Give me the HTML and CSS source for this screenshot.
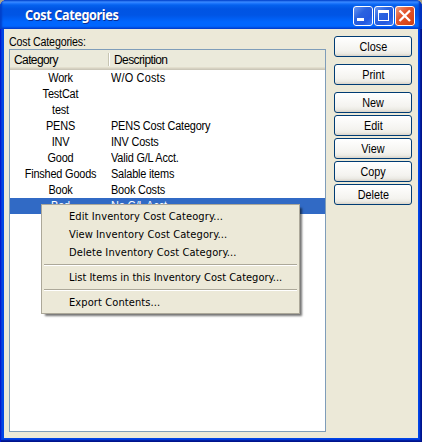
FILE: index.html
```html
<!DOCTYPE html>
<html lang="en">
<head>
<meta charset="utf-8">
<title>Cost Categories</title>
<link rel="stylesheet" href="styles.css">
</head>
<body>
<div class="window">
  <header class="titlebar">
    <h1>Cost Categories</h1>
    <div class="controls">
      <svg class="control" viewBox="0 0 20 20"><rect class="face" x=".5" y=".5" width="19" height="19" rx="2.5"/><path d="M4 12h7v3H4z" fill="#fff"/></svg>
      <svg class="control" viewBox="0 0 20 20"><rect class="face" x=".5" y=".5" width="19" height="19" rx="2.5"/><path d="M4 4h11v11H4zM5 7v7h9V7z" fill="#fff" fill-rule="evenodd"/></svg>
      <svg class="control close" viewBox="0 0 20 20"><rect class="face" x=".5" y=".5" width="19" height="19" rx="2.5"/><path d="M4.5 4.5l10.5 10.5M15 4.5L4.5 15" stroke="#fff" stroke-width="2.3"/></svg>
    </div>
  </header>
  <main class="client">
    <section class="panel">
      <div class="label">Cost Categories:</div>
      <div class="list">
        <div class="head"><span>Category</span><span>Description</span></div>
        <div class="row"><span>Work</span><span class="wo">W/O Costs</span></div>
        <div class="row"><span>TestCat</span><span></span></div>
        <div class="row"><span>test</span><span></span></div>
        <div class="row"><span>PENS</span><span>PENS Cost Category</span></div>
        <div class="row"><span>INV</span><span>INV Costs</span></div>
        <div class="row"><span>Good</span><span>Valid G/L Acct.</span></div>
        <div class="row"><span>Finshed Goods</span><span>Salable items</span></div>
        <div class="row"><span>Book</span><span>Book Costs</span></div>
        <div class="row selected"><span>Bad</span><span>No G/L Acct</span></div>
      </div>
    </section>
    <nav class="buttons">
      <button class="apart"><span>Close</span></button>
      <button class="apart"><span>Print</span></button>
      <button><span>New</span></button>
      <button><span>Edit</span></button>
      <button><span>View</span></button>
      <button><span>Copy</span></button>
      <button><span>Delete</span></button>
    </nav>
  </main>
  <div class="menu">
    <div class="item">Edit Inventory Cost Cateogry...</div>
    <div class="item">View Inventory Cost Category...</div>
    <div class="item">Delete Inventory Cost Category...</div>
    <hr>
    <div class="item long">List Items in this Inventory Cost Category...</div>
    <hr>
    <div class="item">Export Contents...</div>
  </div>
</div>
</body>
</html>
```
FILE: styles.css
```css
* { box-sizing: border-box; }
body { margin: 0; background: #a9a48c; font: 12px/16px "Liberation Sans", Arial, sans-serif; letter-spacing: -0.2px; color: #000; }
.window {
  position: relative; width: 422px; height: 442px; display: flex; flex-direction: column;
  padding: 0 4px 4px; border-radius: 7px 7px 0 0; overflow: hidden; background: #0046e6;
  box-shadow: inset 1px 0 #0019cf, inset -1px -1px #00138c, inset -2px -2px #001ea0, inset 2px 0 #0838d8, inset -3px -3px #0039dc;
}
.titlebar {
  flex: none; height: 29px; margin: 0 -4px; padding: 0 7px 0 25px; display: flex; justify-content: space-between;
  background: linear-gradient(#0a55dc 0, #3c8cff 2px, #237aff 3px, #0562ee 5px, #0054e3 9px, #0055e5 15px, #0066ff 22px, #0066ff 26px, #0050e0 28px, #003dd7 29px);
  box-shadow: inset 2px 0 2px #0041cb, inset -3px 0 2px #0030bd;
}
h1 { margin: 0; color: #fff; font: bold 14px/30px "Noto Sans", sans-serif; letter-spacing: -0.4px; text-shadow: 1px 1px #0a2c91; transform: scaleX(.9); transform-origin: left; }
.controls { display: flex; gap: 1px; padding-top: 6px; }
.control { width: 20px; height: 20px; display: block; border-radius: 3px; background: linear-gradient(135deg, #6f9cf4, #2a62df 40%, #2459e0 70%, #3f83fb); }
.close { background: linear-gradient(135deg, #f0a58c, #e3562e 40%, #d94719 75%, #c43b12); }
.face { fill: none; stroke: #fff; }
.client { flex: 1; display: flex; gap: 8px; padding: 5px 6px 6px 5px; background: #ece9d8; }
.panel { width: 317px; display: flex; flex-direction: column; }
.label { height: 15px; transform: scaleX(.89); transform-origin: left; }
.list { flex: 1; border: 1px solid #7f9db9; background: #fff; }
.head { height: 20px; display: flex; background: #ebeadb; border-bottom: 1px solid #cbc7b8; box-shadow: inset 0 -1px #d6d2c2, inset 0 -2px #e2decd; line-height: 20px; }
.head span { padding-left: 5px; letter-spacing: -0.6px; }
.head span:first-child { width: 99px; margin: 3px 0; padding-left: 4px; line-height: 14px; border-right: 1px solid #c7c5b2; box-shadow: 1px 0 #fff; }
.row { height: 16px; display: flex; }
.row span { transform: scaleX(.91); transform-origin: left; }
.row span:first-child { width: 101px; text-align: center; transform-origin: center; }
.row .wo { letter-spacing: 0.2px; }
.selected { background: #316ac5; color: #fff; }
.buttons { width: 78px; display: flex; flex-direction: column; gap: 2px; padding-top: 2px; }
button { height: 21px; flex: none; padding: 0; border: 1px solid #003c74; border-radius: 3px; background: linear-gradient(#fff, #f4f3ef 70%, #ecebe5 86%, #d9d3c9); font: inherit; line-height: 18px; letter-spacing: 0; color: #000; }
button span { display: inline-block; transform: scaleX(.9); }
.apart { margin-bottom: 5px; }
.menu {
  position: absolute; left: 41px; top: 204px; width: 259px; height: 110px; padding: 3px 2px; border: 1px solid #aca899;
  background: #ece9d8; box-shadow: 3px 3px 2px -1px rgba(0, 0, 0, .55);
  font: 11px/18px "DejaVu Sans Condensed", "DejaVu Sans", sans-serif; font-stretch: condensed; letter-spacing: 0.1px;
}
.item { height: 18px; padding-left: 25px; white-space: nowrap; }
.long { letter-spacing: 0; }
hr { height: 2px; margin: 2px 0 3px; border: 0; border-top: 1px solid #aca899; border-bottom: 1px solid #fff; }
```
